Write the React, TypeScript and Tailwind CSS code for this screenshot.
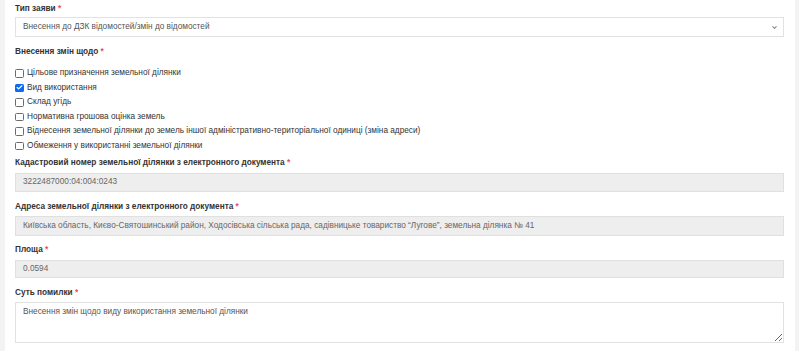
import { Check, ChevronDown } from "lucide-react";

const options = [
  { label: "Цільове призначення земельної ділянки", checked: false },
  { label: "Вид використання", checked: true },
  { label: "Склад угідь", checked: false },
  { label: "Нормативна грошова оцінка земель", checked: false },
  {
    label:
      "Віднесення земельної ділянки до земель іншої адміністративно-територіальної одиниці (зміна адреси)",
    checked: false,
  },
  { label: "Обмеження у використанні земельної ділянки", checked: false },
];

function Label({ text }: { text: string }) {
  return (
    <div className="h-[10px] flex items-center text-[8.25px] font-bold text-[#333] whitespace-nowrap">
      {text}&nbsp;<span className="text-[#e7505a]">*</span>
    </div>
  );
}

function ReadOnlyInput({ value, h }: { value: string; h: string }) {
  return (
    <div
      className={`${h} bg-[#eeeeee] border border-[#e0e0e0] px-[7px] flex items-center text-[8.25px] text-[#666] whitespace-nowrap`}
    >
      {value}
    </div>
  );
}

export default function App() {
  return (
    <div
      className="w-[799px] h-[351px] flex bg-[#f3f3f3] overflow-hidden"
      style={{ fontFamily: '"Liberation Sans", Arial, sans-serif' }}
    >
      <div className="w-[5px]" />
      <div className="flex-1 bg-white pl-[10px] pr-[11px] pt-[4px]">
        {/* Тип заяви */}
        <Label text="Тип заяви" />
        <div className="mt-[3px] h-[20px] border border-[#e2e2e2] pl-[7px] pr-[5px] flex items-center justify-between text-[8.25px] text-[#555]">
          <span>Внесення до ДЗК відомостей/змін до відомостей</span>
          <ChevronDown size={7} strokeWidth={3.5} className="text-[#888]" />
        </div>

        {/* Внесення змін щодо */}
        <div className="mt-[10px]">
          <Label text="Внесення змін щодо" />
        </div>
        <div className="mt-[9px] flex flex-col">
          {options.map((o) => (
            <div key={o.label} className="flex items-center h-[14.5px] text-[8.25px] text-[#333]">
              <span
                className={
                  o.checked
                    ? "w-[8.5px] h-[8.5px] rounded-[1.5px] bg-[#0b6cf0] flex items-center justify-center"
                    : "w-[8.5px] h-[8.5px] rounded-[1.5px] border border-[#6b6b6b] bg-white"
                }
              >
                {o.checked && <Check size={7} strokeWidth={4} className="text-white" />}
              </span>
              <span className="ml-[3.5px]">{o.label}</span>
            </div>
          ))}
        </div>

        <div className="mt-[5px]">
          <Label text="Кадастровий номер земельної ділянки з електронного документа" />
        </div>
        <div className="mt-[5px]">
          <ReadOnlyInput h="h-[19px]" value="3222487000:04:004:0243" />
        </div>

        <div className="mt-[10px]">
          <Label text="Адреса земельної ділянки з електронного документа" />
        </div>
        <div className="mt-[4px]">
          <ReadOnlyInput
            h="h-[20px]"
            value="Київська область, Києво-Святошинський район, Ходосівська сільська рада, садівницьке товариство “Лугове”, земельна ділянка № 41"
          />
        </div>

        <div className="mt-[9px]">
          <Label text="Площа" />
        </div>
        <div className="mt-[5px]">
          <ReadOnlyInput h="h-[18px]" value="0.0594" />
        </div>

        <div className="mt-[10px]">
          <Label text="Суть помилки" />
        </div>
        <textarea
          readOnly
          defaultValue="Внесення змін щодо виду використання земельної ділянки"
          className="mt-[4px] block w-full h-[41px] border border-[#e2e2e2] px-[7px] py-[3px] text-[8.25px] text-[#555] outline-none"
        />
      </div>
      <div className="w-[4px]" />
    </div>
  );
}
